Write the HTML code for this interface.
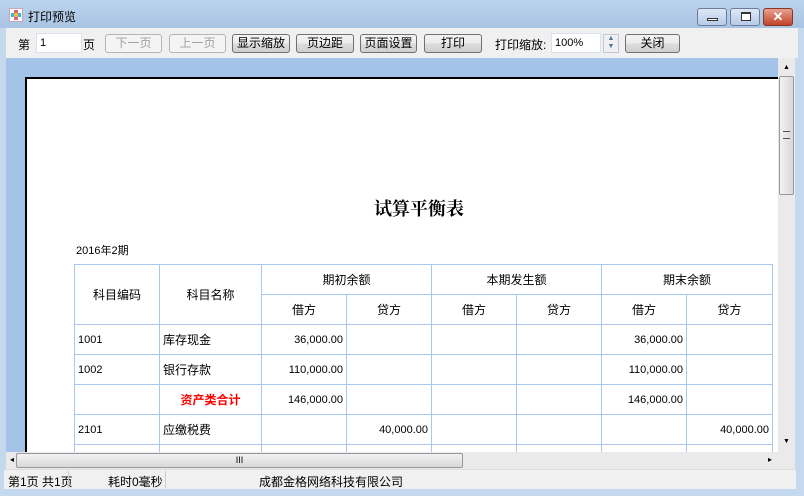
<!DOCTYPE html>
<html><head><meta charset="utf-8"><style>
*{margin:0;padding:0;box-sizing:border-box}
body{width:804px;height:496px;overflow:hidden;background:#c4d8ee;font-family:"Liberation Sans","Noto Sans CJK SC",sans-serif;font-size:12px;color:#000;position:relative}
.a{position:absolute}
.title{left:0;top:0;width:804px;height:28px;background:linear-gradient(#bcd3ec,#a9c4e4)}
.btn{position:absolute;top:34px;height:19px;border:1px solid #707070;border-radius:3px;background:linear-gradient(#f4f4f4 0,#ebebeb 50%,#dcdcdc 51%,#cfcfcf 100%);text-align:center;line-height:17px;font-size:12px}
.dis{border-color:#b5b5b5;background:#f4f4f4;color:#a0a0a0}
.inp{position:absolute;top:33px;height:20px;background:#fff;border:1px solid #d9e2ec;padding-left:3px;line-height:18px;font-size:11px}
.wb{position:absolute;top:8px;height:18px;border:1px solid #6b7d98;border-radius:3px;background:linear-gradient(#dde8f5,#b6cbe6)}
table{border-collapse:collapse;position:absolute;left:74px;top:264px;table-layout:fixed}
td{border:1px solid #a8c8f0;height:30px;font-size:12px;padding:0 3px}
.c{text-align:center}.r{text-align:right;font-size:11px}.n{font-size:11px}
</style></head><body>
<div class="a title"></div>
<div class="a" style="left:9px;top:8px;width:14px;height:14px;border:1px solid #c8a8b0;background:#fff"><div class="a" style="left:4px;top:1px;width:4px;height:10px;background:#e06080"></div><div class="a" style="left:1px;top:4px;width:10px;height:4px;background:#40b0e0"></div><div class="a" style="left:4px;top:4px;width:4px;height:4px;background:#f0c030"></div></div>
<div class="a" style="left:28px;top:8px;font-size:12px">打印预览</div>
<div class="wb" style="left:697px;width:30px"><div class="a" style="left:9px;top:9px;width:11px;height:3px;border:1px solid #333;background:#fff"></div></div>
<div class="wb" style="left:730px;width:30px"><div class="a" style="left:10px;top:3px;width:10px;height:9px;border:1px solid #333;border-top-width:2px;background:#fff"></div></div>
<div class="wb" style="left:763px;width:30px;background:linear-gradient(#e8a090,#c0442c);border-color:#8a3424;color:#fff;text-align:center;font-weight:bold;line-height:15px;font-size:13px">✕</div>
<div class="a" style="left:6px;top:28px;width:792px;height:30px;background:#f0f0f0"></div>
<div class="a" style="left:18px;top:36px">第</div>
<div class="inp" style="left:36px;width:46px">1</div>
<div class="a" style="left:83px;top:36px">页</div>
<div class="btn dis" style="left:105px;width:57px">下一页</div>
<div class="btn dis" style="left:169px;width:57px">上一页</div>
<div class="btn" style="left:232px;width:58px">显示缩放</div>
<div class="btn" style="left:296px;width:58px">页边距</div>
<div class="btn" style="left:360px;width:57px">页面设置</div>
<div class="btn" style="left:424px;width:58px">打印</div>
<div class="a" style="left:495px;top:36px">打印缩放:</div>
<div class="inp" style="left:551px;width:50px">100%</div>
<div class="a" style="left:603px;top:34px;width:16px;height:19px;border:1px solid #c0c8d4;background:#f0f0f0;font-size:7px;line-height:8px;text-align:center;color:#5070a0">▲<br>▼</div>
<div class="btn" style="left:625px;width:55px">关闭</div>
<div class="a" style="left:6px;top:58px;width:772px;height:394px;background:#a3c3e8;overflow:hidden">
<div class="a" style="left:19px;top:19px;width:760px;height:400px;background:#fff;border-left:2px solid #000;border-top:2px solid #000"></div>
</div>
<div class="a" style="left:25px;top:77px;width:753px;height:375px;overflow:hidden">
<div class="a" style="left:349px;top:118px;font-family:'Liberation Serif','Noto Serif CJK SC',serif;font-size:18px;font-weight:bold">试算平衡表</div>
<div class="a" style="left:51px;top:165px;font-size:11px">2016年2期</div>
</div>
<div class="a" style="left:25px;top:77px;width:753px;height:375px;overflow:hidden">
<table style="left:49px;top:187px">
<colgroup><col style="width:85px"><col style="width:102px"><col style="width:85px"><col style="width:85px"><col style="width:85px"><col style="width:85px"><col style="width:85px"><col style="width:86px"></colgroup>
<tr><td class="c" rowspan="2" style="height:60px">科目编码</td><td class="c" rowspan="2">科目名称</td><td class="c" colspan="2">期初余额</td><td class="c" colspan="2">本期发生额</td><td class="c" colspan="2">期末余额</td></tr>
<tr><td class="c">借方</td><td class="c">贷方</td><td class="c">借方</td><td class="c">贷方</td><td class="c">借方</td><td class="c">贷方</td></tr>
<tr><td class="n">1001</td><td>库存现金</td><td class="r">36,000.00</td><td></td><td></td><td></td><td class="r">36,000.00</td><td></td></tr>
<tr><td class="n">1002</td><td>银行存款</td><td class="r">110,000.00</td><td></td><td></td><td></td><td class="r">110,000.00</td><td></td></tr>
<tr><td></td><td class="c" style="color:#f00;font-weight:bold">资产类合计</td><td class="r">146,000.00</td><td></td><td></td><td></td><td class="r">146,000.00</td><td></td></tr>
<tr><td class="n">2101</td><td>应缴税费</td><td></td><td class="r">40,000.00</td><td></td><td></td><td></td><td class="r">40,000.00</td></tr>
<tr><td></td><td></td><td></td><td></td><td></td><td></td><td></td><td></td></tr>
</table>
</div>
<div class="a" style="left:778px;top:58px;width:17px;height:394px;background:#eaeaea"><div class="a" style="left:5px;top:6px;font-size:7px">▲</div><div class="a" style="left:1px;top:18px;width:15px;height:119px;border:1px solid #999;border-radius:2px;background:linear-gradient(90deg,#f2f2f2,#d8d8d8)"><div class="a" style="left:3px;top:54px;width:7px;height:8px;border-top:1px solid #555;border-bottom:1px solid #555"></div></div><div class="a" style="left:5px;top:380px;font-size:7px">▼</div></div>
<div class="a" style="left:6px;top:452px;width:772px;height:17px;background:#eaeaea"><div class="a" style="left:4px;top:3px;font-size:8px">◂</div><div class="a" style="left:10px;top:1px;width:447px;height:15px;border:1px solid #999;border-radius:2px;background:linear-gradient(#f2f2f2,#d8d8d8);text-align:center;font-size:9px;line-height:12px">III</div><div class="a" style="left:762px;top:3px;font-size:8px">▸</div></div>
<div class="a" style="left:778px;top:452px;width:17px;height:17px;background:#eaeaea"></div>
<div class="a" style="left:4px;top:469px;width:792px;height:20px;background:#f0f0f0;border-top:1px solid #ddd"></div>
<div class="a" style="left:8px;top:473px">第1页 共1页</div>
<div class="a" style="left:68px;top:471px;width:1px;height:17px;background:#ccc"></div>
<div class="a" style="left:108px;top:473px">耗时0毫秒</div>
<div class="a" style="left:165px;top:471px;width:1px;height:17px;background:#ccc"></div>
<div class="a" style="left:259px;top:473px">成都金格网络科技有限公司</div>
</body></html>
